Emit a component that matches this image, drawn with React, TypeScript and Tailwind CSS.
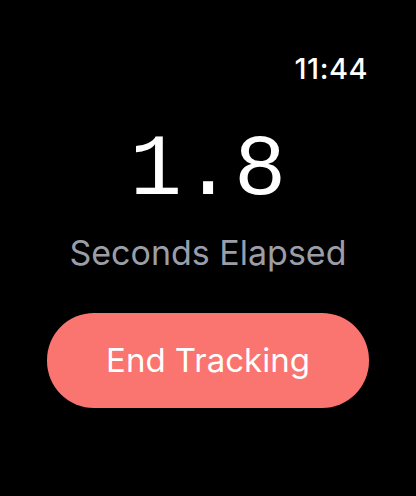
export default function App() {
  return (
    <div className="w-[416px] h-[496px] bg-black text-white flex flex-col" style={{ fontFamily: "Inter, 'Noto Sans', sans-serif" }}>
      {/* status bar */}
      <div className="flex justify-end pt-[50px] pr-[48px]">
        <span className="text-[29px] leading-[38px] font-medium tracking-[0.5px]">11:44</span>
      </div>

      {/* timer */}
      <div className="flex flex-col items-center mt-[38px]">
        <span className="text-[87px] leading-[90px] font-['Liberation_Mono',monospace]">1.8</span>
        <span className="mt-[17px] text-[34px] leading-[40px] text-[#9b9ea7]">Seconds Elapsed</span>
      </div>

      <div className="px-[47px] mt-[40px]">
        <button className="w-full h-[95px] rounded-[47px] bg-[#fa7470] text-white text-[33px] font-normal flex items-center justify-center">
          End Tracking
        </button>
      </div>
    </div>
  );
}
